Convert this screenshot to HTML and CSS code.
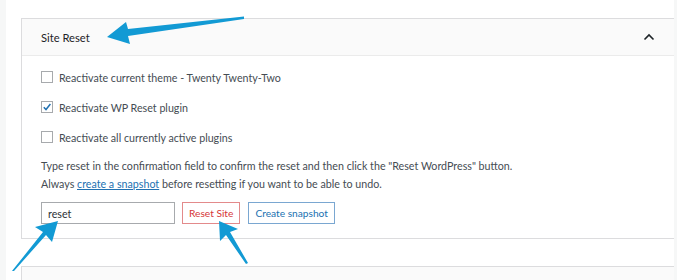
FILE: index.html
```html
<!DOCTYPE html>
<html lang="en">
  <head>
    <meta charset="UTF-8" />
    <title>Site Reset</title>
    <link rel="stylesheet" href="styles.css">
  </head>
  <body>
    <div class="wrap">
      <div class="card">
        <div class="card-header">
          <h3 class="card-title">Site Reset</h3>
          <svg class="toggle" width="12" height="8" viewBox="0 0 12 8">
            <path d="M1.5 6.5 L6 2 L10.5 6.5" fill="none" stroke="#1d2327" stroke-width="1.6" />
          </svg>
        </div>
        <div class="card-body">
          <label class="check-row">
            <span class="box"></span>
            Reactivate current theme - Twenty Twenty-Two
          </label>
          <label class="check-row">
            <span class="box checked">
              <svg width="10" height="10" viewBox="0 0 10 10">
                <path d="M1.8 5.2 L4 7.5 L8.4 2" fill="none" stroke="#2271b1" stroke-width="1.5" />
              </svg>
            </span>
            Reactivate WP Reset plugin
          </label>
          <label class="check-row">
            <span class="box"></span>
            Reactivate all currently active plugins
          </label>
          <p class="help">
            Type reset in the confirmation field to confirm the reset and then click the "Reset WordPress" button.<br>
            Always <a href="#">create a snapshot</a> before resetting if you want to be able to undo.
          </p>
          <div class="actions">
            <input class="confirm" type="text" value="reset">
            <button class="btn btn-danger">Reset Site</button>
            <button class="btn btn-primary">Create snapshot</button>
          </div>
        </div>
      </div>
      <div class="card card-next">
        <div class="card-header"></div>
      </div>
    </div>

    <!-- annotation arrows drawn over the screenshot -->
    <svg class="arrows" width="677" height="280" viewBox="0 0 677 280">
      <polygon points="244,16.5 128,29 126,22 107,37 130,44 128,36 244,19" />
      <polygon points="12,271 43,232 35,227 58,221 52,242 46,235 14,271" />
      <polygon points="248,263 230,232 238,229 219,221 220,241 226,235 246,264" />
    </svg>
  </body>
</html>
```

FILE: styles.css
```css
body {
  margin: 0;
  font-family: Lato, sans-serif;
  font-size: 10.7px;
  color: #454c53;
  background-color: #f6f7f7;
}

.wrap {
  margin: 0 3px 0 6px;
  height: 280px;
  overflow: hidden;
  background: white;
  padding-top: 18px;
  box-sizing: border-box;
}

.card {
  margin-left: 15px;
  border: 1px solid #dcdcde;
  border-right: none;
  background: white;
}

.card-header {
  height: 36px;
  padding: 0 20px 0 19px;
  display: flex;
  align-items: center;
  justify-content: space-between;
  background: #fafafa;
  border-bottom: 1px solid #ebebeb;
}

.card-title {
  margin: 0;
  font-size: 11.2px;
  font-weight: normal;
  color: #1d2327;
}

.toggle {
  margin-right: -1px;
}

.card-body {
  padding: 15px 20px 14px 19px;
}

.check-row {
  display: flex;
  align-items: center;
  gap: 6px;
  height: 12px;
  margin-bottom: 18px;
}

.check-row:last-of-type {
  margin-bottom: 14px;
}

.box {
  width: 10px;
  height: 10px;
  border: 1px solid #a7aaad;
  background: white;
  display: flex;
  align-items: center;
  justify-content: center;
}

.help {
  margin: 0;
  line-height: 18px;
}

.help a {
  color: #2271b1;
}

.actions {
  display: flex;
  gap: 7px;
  margin-top: 9px;
}

.confirm {
  box-sizing: border-box;
  width: 134px;
  height: 22px;
  margin: 0;
  padding: 0 6px;
  border: 1px solid #a7aaad;
  font-family: inherit;
  font-size: 10.7px;
  color: #2c3338;
}

.btn {
  height: 22px;
  padding: 0 6px;
  background: white;
  font-family: inherit;
  font-size: 10.2px;
  cursor: pointer;
}

.btn-danger {
  border: 1px solid #e38a8b;
  color: #d63638;
}

.btn-primary {
  margin-left: 1px;
  border: 1px solid #7aa7d1;
  color: #2271b1;
}

.card-next {
  margin-top: 27px;
}

.arrows {
  position: absolute;
  left: 0;
  top: 0;
  fill: #129ad4;
}
```
